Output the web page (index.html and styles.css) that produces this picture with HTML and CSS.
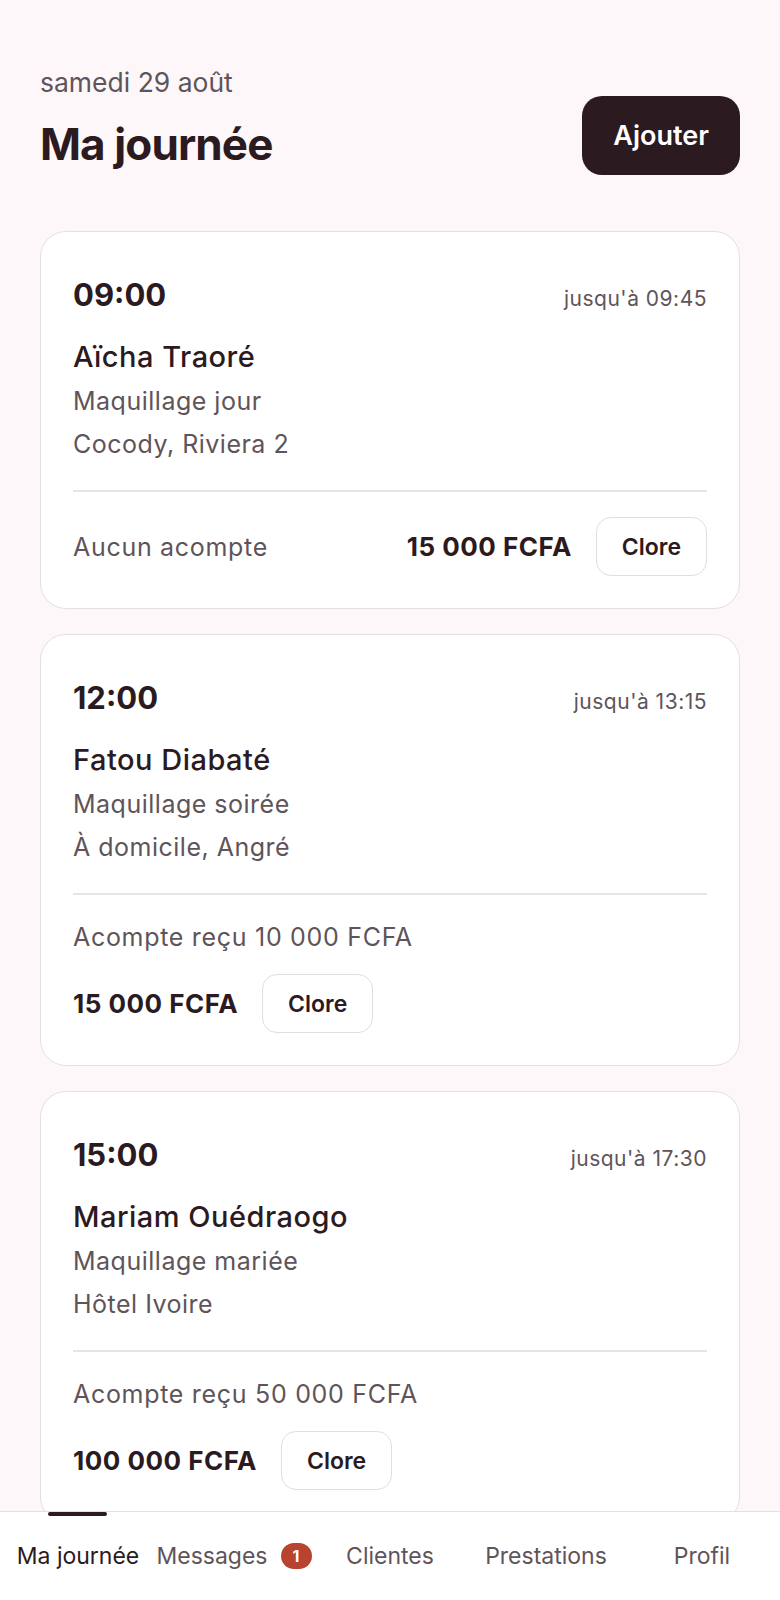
FILE: index.html
```html
<!DOCTYPE html>
<html lang="fr">
<head>
    <meta charset="UTF-8">
    <meta name="viewport" content="width=device-width, initial-scale=1.0">
    <link rel="stylesheet" href="styles.css">
    <title>Ma journée</title>
</head>
<body>
    <div id="page">
        <header class="top">
            <div class="top-text">
                <p class="date">samedi 29 août</p>
                <h1>Ma journée</h1>
            </div>
            <button class="add-btn">Ajouter</button>
        </header>

        <div class="list">
            <div class="card">
                <div class="card-time">
                    <span class="time">09:00</span>
                    <span class="until">jusqu'à 09:45</span>
                </div>
                <p class="client">Aïcha Traoré</p>
                <p class="info">Maquillage jour</p>
                <p class="info">Cocody, Riviera 2</p>
                <div class="card-foot">
                    <span class="deposit">Aucun acompte</span>
                    <div class="settle">
                        <span class="price">15 000 FCFA</span>
                        <button class="close-btn">Clore</button>
                    </div>
                </div>
            </div>

            <div class="card">
                <div class="card-time">
                    <span class="time">12:00</span>
                    <span class="until">jusqu'à 13:15</span>
                </div>
                <p class="client">Fatou Diabaté</p>
                <p class="info">Maquillage soirée</p>
                <p class="info">À domicile, Angré</p>
                <div class="card-foot">
                    <span class="deposit">Acompte reçu 10 000 FCFA</span>
                    <div class="settle">
                        <span class="price">15 000 FCFA</span>
                        <button class="close-btn">Clore</button>
                    </div>
                </div>
            </div>

            <div class="card">
                <div class="card-time">
                    <span class="time">15:00</span>
                    <span class="until">jusqu'à 17:30</span>
                </div>
                <p class="client">Mariam Ouédraogo</p>
                <p class="info">Maquillage mariée</p>
                <p class="info">Hôtel Ivoire</p>
                <div class="card-foot">
                    <span class="deposit">Acompte reçu 50 000 FCFA</span>
                    <div class="settle">
                        <span class="price">100 000 FCFA</span>
                        <button class="close-btn">Clore</button>
                    </div>
                </div>
            </div>
        </div>
    </div>

    <nav class="tabs">
        <a class="tab active">Ma journée</a>
        <a class="tab">Messages <span class="badge">1</span></a>
        <a class="tab">Clientes</a>
        <a class="tab">Prestations</a>
        <a class="tab">Profil</a>
    </nav>
</body>
</html>
```

FILE: styles.css
```css
body {
    font-family: Inter, 'Liberation Sans', sans-serif;
    background-color: #fdf7fa;
    color: #2b1a20;
    margin: 0;
}

#page {
    padding: 65px 40px 140px;
}

p {
    margin: 0;
}

.top {
    display: flex;
    justify-content: space-between;
    align-items: flex-end;
}

.date {
    font-size: 26.5px;
    line-height: 34px;
    color: #5f5459;
}

h1 {
    margin: 16px 0 0;
    font-size: 44px;
    line-height: 58px;
    font-weight: 700;
    letter-spacing: -0.02em;
}

.add-btn {
    height: 79px;
    margin-bottom: -2px;
    padding: 0 31px;
    background-color: #2b1a20;
    color: #ffffff;
    border: none;
    border-radius: 20px;
    font-family: inherit;
    font-size: 27px;
    font-weight: 600;
    cursor: pointer;
}

.list {
    margin-top: 58px;
    display: flex;
    flex-direction: column;
    gap: 25px;
}

.card {
    background-color: #ffffff;
    border: 1px solid #e4dfe2;
    border-radius: 26px;
    padding: 32px;
}

.card-time {
    display: flex;
    justify-content: space-between;
    align-items: baseline;
    padding-top: 6px;
    line-height: 50px;
}

.time {
    font-size: 31px;
    font-weight: 700;
}

.until {
    font-size: 21px;
    letter-spacing: 0.5px;
    color: #5f5459;
}

.client {
    margin-top: 15px;
    font-size: 29px;
    line-height: 36px;
    font-weight: 500;
    letter-spacing: 0.5px;
}

.info {
    margin-top: 9px;
    font-size: 25px;
    line-height: 34px;
    letter-spacing: 0.5px;
    color: #5f5459;
}

.card-foot {
    margin-top: 29px;
    padding-top: 25px;
    border-top: 2px solid #e8e4e6;
    display: flex;
    flex-wrap: wrap;
    justify-content: space-between;
    align-items: center;
    column-gap: 16px;
    row-gap: 20px;
}

.deposit {
    font-size: 25px;
    line-height: 34px;
    letter-spacing: 0.7px;
    color: #5f5459;
}

.settle {
    display: flex;
    align-items: center;
    gap: 24px;
}

.price {
    font-size: 26px;
    font-weight: 700;
    letter-spacing: 0.5px;
}

.close-btn {
    height: 59px;
    padding: 0 25px;
    background-color: #ffffff;
    color: #2b1a20;
    border: 1.5px solid #e2dddf;
    border-radius: 15px;
    font-family: inherit;
    font-size: 23px;
    font-weight: 600;
    cursor: pointer;
}

.tabs {
    position: fixed;
    left: 0;
    right: 0;
    bottom: 0;
    height: 88px;
    background-color: #ffffff;
    border-top: 1px solid #e4dfe2;
    display: grid;
    grid-template-columns: repeat(5, 1fr);
}

.tab {
    position: relative;
    display: flex;
    justify-content: center;
    align-items: center;
    gap: 13px;
    font-size: 23px;
    color: #5f5459;
    white-space: nowrap;
}

.tab.active {
    color: #2b1a20;
}

.tab.active::before {
    content: "";
    position: absolute;
    top: 0;
    left: 50%;
    width: 59px;
    height: 4px;
    margin-left: -30px;
    border-radius: 2px;
    background-color: #2b1a20;
}

.badge {
    display: inline-flex;
    justify-content: center;
    align-items: center;
    width: 31px;
    height: 26px;
    border-radius: 13px;
    background-color: #b8432f;
    color: #ffffff;
    font-size: 16px;
    font-weight: 700;
}
```
